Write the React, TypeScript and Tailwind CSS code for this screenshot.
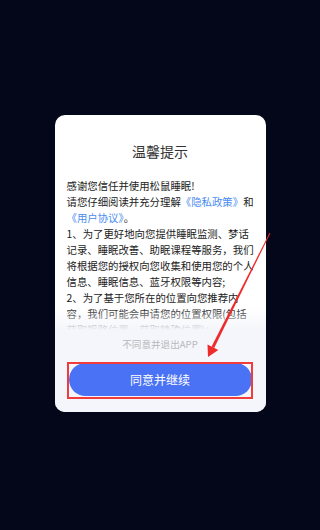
import React from 'react';

const lines: React.ReactNode[] = [
  '感谢您信任并使用松鼠睡眠!',
  <>
    请您仔细阅读并充分理解<span className="text-[#4a8cf0]">《隐私政策》</span>和
  </>,
  <>
    <span className="text-[#4a8cf0]">《用户协议》</span>。
  </>,
  '1、为了更好地向您提供睡眠监测、梦话',
  '记录、睡眠改善、助眠课程等服务，我们',
  '将根据您的授权向您收集和使用您的个人',
  '信息、睡眠信息、蓝牙权限等内容;',
  '2、为了基于您所在的位置向您推荐内',
  '容，我们可能会申请您的位置权限(包括',
  '获取粗略位置、获取精确位置)；',
];

const font = { fontFamily: '"Noto Sans CJK SC", "Noto Sans", sans-serif' };

const Arrow = () => (
  <svg className="pointer-events-none absolute left-0 top-0" width="300" height="530" viewBox="0 0 300 530">
    <polygon points="270.4,233.2 269.6,232.8 211.6,346.5 214.2,347.9" fill="#ee2b2b" />
    <polygon points="208,357 218.3,349.9 207.5,344.5" fill="#ee2b2b" />
  </svg>
);

export default function App() {
  return (
    <div className="relative h-[530px] w-full overflow-hidden bg-[#04061a]" style={font}>
      <div className="flex justify-center pt-[115px]">
        <div className="w-[211px] overflow-hidden rounded-[10px] bg-white">
          <h2 className="pt-[26px] text-center text-[14px] leading-[20px] font-normal text-[#333]">温馨提示</h2>

          <div className="relative mt-[17px] h-[152px] overflow-hidden px-3">
            {lines.map((line, i) => (
              <p key={i} className="whitespace-nowrap text-[10.4px] leading-[16px] text-[#222]">
                {line}
              </p>
            ))}
            <div className="absolute inset-x-0 bottom-0 h-[22px] bg-gradient-to-b from-white/0 to-[#f5f6fb]" />
          </div>

          <div className="bg-[#f5f6fb] px-[14px] pt-[6px] pb-[16px]">
            <p className="text-center text-[9.6px] leading-[16px] text-[#b8b8bc]">不同意并退出APP</p>
            <div className="relative mt-[11px]">
              <button className="h-[33px] w-full rounded-full bg-[#4a72f5] text-[12px] text-white">
                同意并继续
              </button>
              <span className="pointer-events-none absolute -top-[1px] -bottom-[3px] -left-[2px] -right-[1px] border-2 border-[#f03c3c]" />
            </div>
          </div>
        </div>
      </div>
      <Arrow />
    </div>
  );
}
